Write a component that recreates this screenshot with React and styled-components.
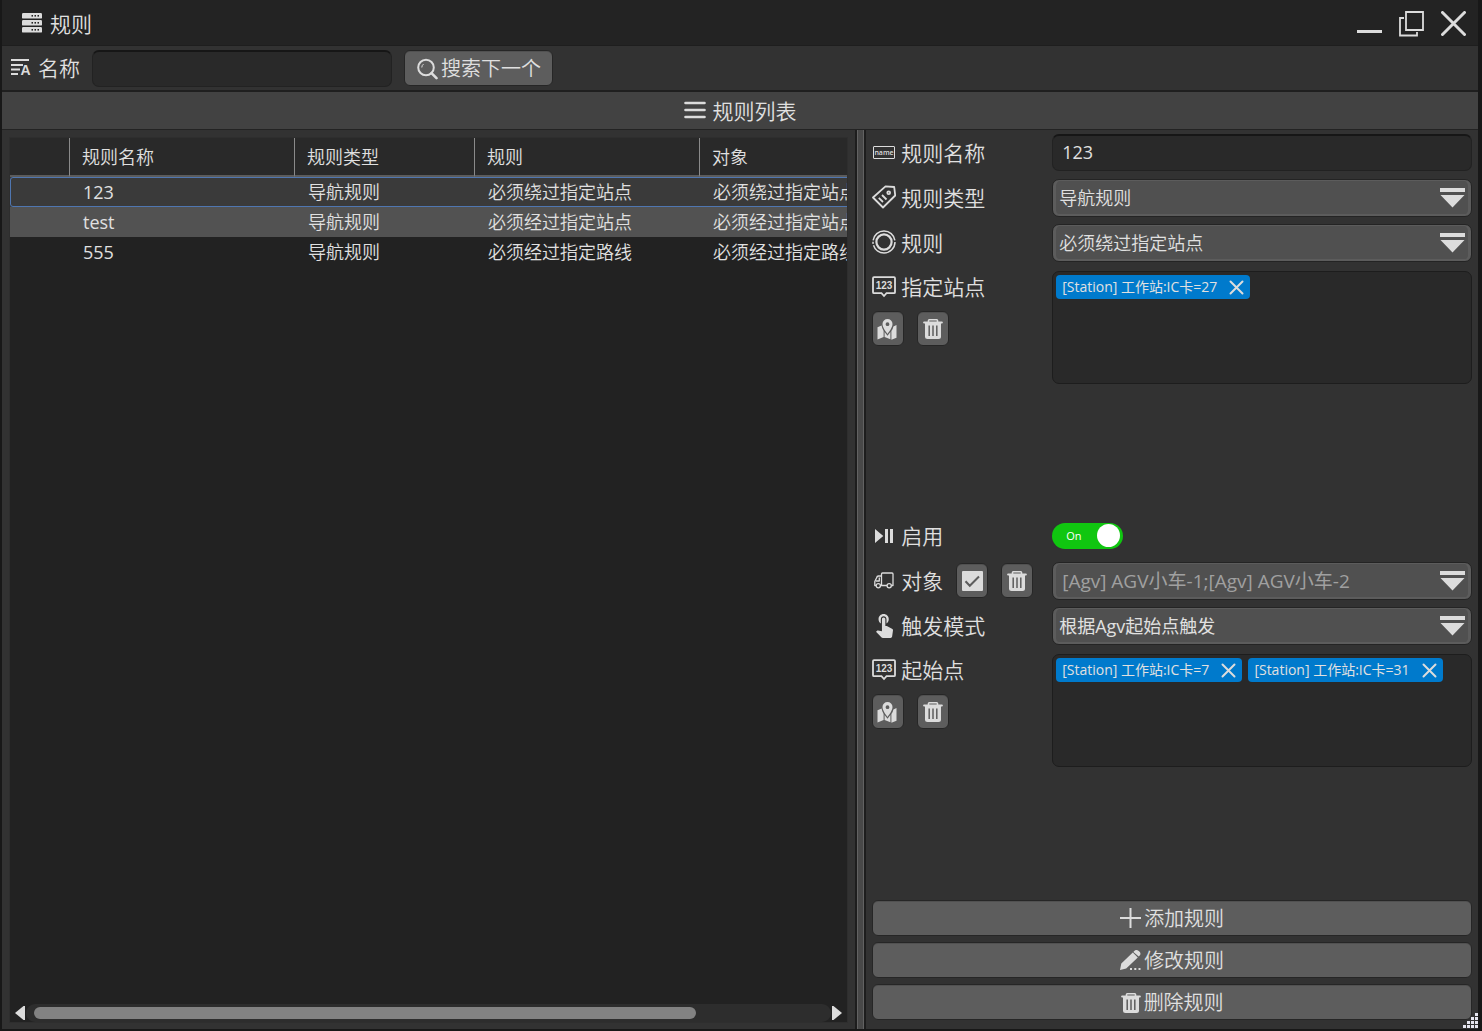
import React, { useState } from 'react'
import styled, { createGlobalStyle } from 'styled-components'

const GlobalStyle = createGlobalStyle`
  * {
    box-sizing: border-box;
  }
  body {
    margin: 0;
    background: #1a1a1a;
    color: #e0e0e0;
    font-family: 'Open Sans', 'Noto Sans CJK SC', sans-serif;
    font-size: 18px;
    font-weight: 350;
    line-height: 24px;
  }
  button, input, select {
    font: inherit;
    color: inherit;
    margin: 0;
  }
  svg {
    display: block;
    flex: none;
  }
`

const Window = styled.div`
  display: flex;
  flex-direction: column;
  height: 100vh;
  min-height: 860px;
  overflow: hidden;
  position: relative;
  border: solid #181818;
  border-width: 0 4px 2px 2px;
  background: #323232;
`

const TitleBar = styled.header`
  display: flex;
  align-items: center;
  height: 46px;
  padding: 2px 12px 0 20px;
  background: #232323;
  border-bottom: 1px solid #1e1e1e;
  & h1 {
    flex: 1;
    margin: 0 0 0 8px;
    font-size: 21px;
    font-weight: 350;
    line-height: 28px;
  }
`

const WindowButtons = styled.div`
  display: flex;
  gap: 17px;
`

const WindowButton = styled.button`
  padding: 0;
  border: 0;
  background: none;
`

const Toolbar = styled.form`
  display: flex;
  align-items: center;
  height: 46px;
  padding: 0 9px;
  border-bottom: 2px solid #1f1f1f;
  & label {
    display: flex;
    align-items: center;
    gap: 6px;
    margin-right: 12px;
    font-size: 21px;
  }
`

const TextBox = styled.input`
  width: ${props => props.$width || '100%'};
  height: 37px;
  padding: 0 9px 2px;
  border: 1px solid #222;
  border-top: 2px solid #161616;
  border-radius: 7px;
  background: #292929;
  font-weight: 400;
  outline: none;
`

const Button = styled.button`
  display: flex;
  align-items: center;
  justify-content: center;
  gap: 3px;
  height: 36px;
  padding: 1px 11px 0;
  border: 1px solid #262626;
  border-radius: 6px;
  background: #5d5d5d;
  box-shadow: inset 0 1px #515151;
  font-size: 20px;
`

const SearchButton = styled(Button)`
  margin-left: 12px;
`

const ListHeading = styled.h2`
  display: flex;
  align-items: center;
  justify-content: center;
  gap: 7px;
  height: 38px;
  margin: 0;
  border-bottom: 1px solid #232323;
  background: #424242;
  font-size: 21px;
  font-weight: 350;
`

const Body = styled.main`
  display: flex;
  flex: 1;
  min-height: 0;
`

const ListPane = styled.section`
  flex: 855 1 0;
  min-width: 0;
  padding: 7px 7px 6px;
`

const ListBox = styled.div`
  display: flex;
  flex-direction: column;
  height: 100%;
  border: 1px solid #2e2e2e;
  background: #222;
`

const TableScroll = styled.div`
  flex: 1;
  overflow: hidden;
`

const Table = styled.table`
  width: 915px;
  table-layout: fixed;
  border-spacing: 0;
  & th {
    height: 39px;
    padding: 0 12px;
    border-right: 1px solid #8a8a8a;
    border-bottom: 2px solid #5b5b5b;
    background: #292929;
    font-weight: 350;
    text-align: left;
  }
  & td {
    height: 30px;
    padding: 0 13px;
    white-space: nowrap;
  }
`

const NameCell = styled.td`
  font-weight: 400;
`

const Row = styled.tr`
  background: ${props => (props.$selected ? '#3a3a3a' : props.$hovered ? '#525252' : 'transparent')};
  border-radius: 3px;
  outline: ${props => (props.$selected ? '1px solid #4f76b0' : 'none')};
  outline-offset: -1px;
`

const ScrollBar = styled.div`
  display: flex;
  align-items: center;
  gap: 1px;
  height: 19px;
  padding: 0 5px;
`

const ScrollTrack = styled.div`
  flex: 1;
  height: 18px;
  padding: 3px 8px;
  border-radius: 9px;
  background: #2d2d2d;
`

const ScrollThumb = styled.div`
  height: 12px;
  border-radius: 6px;
  background: #828282;
`

const Splitter = styled.div`
  width: 11px;
  border: solid #1d1d1d;
  border-width: 0 2px;
  background: #484848;
  box-shadow: inset 1px 0 #626262, inset -1px 0 #626262;
`

const FormPane = styled.form`
  display: flex;
  flex-direction: column;
  flex: 611 1 0;
  min-width: 0;
  padding: 0 6px 9px;
`

const Field = styled.div`
  display: grid;
  grid-template-columns: 3fr 7fr;
  align-items: center;
  height: 45px;
`

const TagField = styled.div`
  display: grid;
  grid-template-columns: 3fr 7fr;
  align-items: start;
  flex: 1;
  padding-top: 6px;
`

const Label = styled.label`
  display: flex;
  align-items: center;
  height: 32px;
  font-size: 21px;
  white-space: nowrap;
`

const IconSlot = styled.span`
  display: flex;
  justify-content: center;
  width: 24px;
  margin-right: 5px;
`

const LabelGroup = styled.div`
  display: flex;
  align-items: center;
  gap: 13px;
`

const IconButtons = styled.div`
  display: flex;
  gap: 13px;
  margin-top: 8px;
`

const IconButton = styled(Button)`
  width: 32px;
  height: 35px;
  padding: 1px 0 0;
`

const SelectWrap = styled.div`
  display: grid;
  align-items: center;
  & > * {
    grid-area: 1 / 1;
  }
  & > svg {
    justify-self: end;
    margin-right: 7px;
    pointer-events: none;
  }
`

const Select = styled.select`
  width: 100%;
  height: 38px;
  padding: 0 40px 0 ${props => (props.$muted ? '9px' : '6px')};
  appearance: none;
  border: 1px solid #242424;
  border-radius: 7px;
  background: #505050;
  box-shadow: inset 3px 0 #5c5c5c, inset -3px 0 #5c5c5c, inset 0 1px #5c5c5c, inset 0 -2px #5c5c5c;
  color: ${props => (props.$muted ? '#a0a0a0' : '#e0e0e0')};
  font-size: ${props => (props.$muted ? '19px' : '18px')};
  font-weight: ${props => (props.$latin ? 400 : 350)};
  outline: none;
`

const TagBox = styled.div`
  display: flex;
  flex-wrap: wrap;
  align-content: flex-start;
  gap: 6px;
  height: 113px;
  padding: 3px;
  border: 1px solid #1d1d1d;
  border-radius: 7px;
  background: #292929;
`

const Tag = styled.span`
  display: flex;
  align-items: center;
  gap: 12px;
  height: 24px;
  padding: 0 6px;
  border-radius: 4px;
  background: #007acc;
  font-size: 14px;
  font-weight: 400;
  line-height: 24px;
  white-space: nowrap;
`

const TagRemove = styled.button`
  padding: 0;
  border: 0;
  background: none;
`

const Switch = styled.label`
  display: flex;
  align-items: center;
  justify-content: space-between;
  width: 71px;
  height: 26px;
  padding: 0 3px 0 14px;
  border-radius: 13px;
  background: ${props => (props.$on ? '#10c610' : '#777')};
  color: #fff;
  font-size: 11px;
  font-weight: 400;
  & input {
    appearance: none;
    width: 23px;
    height: 23px;
    border-radius: 50%;
    background: #fff;
  }
`

const Actions = styled.div`
  display: grid;
  gap: 6px;
  padding-top: 4px;
`

const Grip = styled.div`
  position: absolute;
  right: 0;
  bottom: 0;
`

const INK = '#dcdcdc'

const ServerIcon = () => (
  <svg width="20" height="22" viewBox="0 0 20 22" fill={INK}>
    {[0, 7, 14].map(y => (
      <g key={y}>
        <rect y={y} width="20" height="5.6" rx="1.2" />
        {[9.5, 12.5, 15.5].map(x => (
          <rect key={x} x={x} y={y + 2} width="1.5" height="1.6" fill="#232323" />
        ))}
      </g>
    ))}
  </svg>
)

const SortNameIcon = () => (
  <svg width="21" height="22" viewBox="0 0 21 22" fill={INK}>
    <path d="M0 2h18v2H0zM0 7h12v2H0zM0 11.500h9v2H0zM0 16h7v2H0z" />
    <text x="9.500" y="18" fontSize="14" fontWeight="700" fontFamily="Liberation Sans">A</text>
  </svg>
)

const SearchIcon = () => (
  <svg width="22" height="22" viewBox="0 0 22 22" fill="none" stroke={INK}>
    <circle cx="10" cy="9.500" r="7.800" strokeWidth="2" />
    <path d="M15.500 15.200l5 5" strokeWidth="2.600" strokeLinecap="round" />
    <path d="M5.800 9.500a4.200 4.200 0 0 1 1.700-3.400" strokeWidth="1" />
  </svg>
)

const MenuIcon = () => (
  <svg width="22" height="20" viewBox="0 0 22 20" stroke={INK} strokeWidth="2.600" strokeLinecap="round">
    <path d="M1.500 2h19M1.500 9h19M1.500 16h19" />
  </svg>
)

const MinimizeIcon = () => (
  <svg width="25" height="26" viewBox="0 0 25 26" fill={INK}>
    <path d="M0 19h25v3H0z" />
  </svg>
)

const RestoreIcon = () => (
  <svg width="25" height="26" viewBox="0 0 25 26" fill="none" stroke={INK} strokeWidth="1.800">
    <path d="M7 1h17v18H7z" />
    <path d="M5 7H1v17.500h17V21" />
  </svg>
)

const CloseIcon = ({ size = 25, width = 3 }) => (
  <svg width={size} height={size} viewBox={`0 0 ${size} ${size}`} stroke={INK} strokeWidth={width} strokeLinecap="round">
    <path d={`M1.500 1.500L${size - 1.5} ${size - 1.5}M${size - 1.5} 1.500L1.500 ${size - 1.5}`} />
  </svg>
)

const NameIcon = () => (
  <svg width="24" height="15" viewBox="0 0 24 15">
    <rect x="1.500" y="1.500" width="21" height="12" rx=".5" fill="none" stroke={INK} />
    <text x="12" y="10" fontSize="7" textAnchor="middle" fontFamily="Open Sans" fontWeight="600" fill={INK}>name</text>
  </svg>
)

const TagIcon = () => (
  <svg width="24" height="26" viewBox="0 0 24 26" fill="none" stroke={INK} strokeWidth="1.800" strokeLinejoin="round">
    <path d="M1 12.500L13.500 1.300l8.700.7 1 8.500L11 22.500z" />
    <circle cx="16.700" cy="7.700" r="1.400" />
    <path d="M6.800 12.800l4.200 4.200M10 10l4.500 4.500" />
  </svg>
)

const RingIcon = () => (
  <svg width="24" height="26" viewBox="0 0 24 26" fill="none" stroke={INK}>
    <circle cx="12" cy="12" r="7.600" strokeWidth="2.200" />
    <circle cx="12" cy="12" r="11" strokeWidth="1.500" strokeDasharray="31 1.500 2 1.500 31 2" />
  </svg>
)

const NumberIcon = () => (
  <svg width="24" height="22" viewBox="0 0 24 22">
    <path d="M2 1.200h20q1 0 1 1v14q0 1-1 1h-7.500L12 20l-2.500-2.800H2q-1 0-1-1v-14q0-1 1-1z" fill="none" stroke={INK} strokeWidth="1.800" />
    <text x="12" y="13" fontSize="10" textAnchor="middle" fontFamily="Liberation Sans" fontWeight="700" fill={INK}>123</text>
  </svg>
)

const PlayPauseIcon = () => (
  <svg width="20" height="14" viewBox="0 0 20 14" fill={INK}>
    <path d="M1 0l8.300 7L1 14zM11 0h3v14h-3zM16 0h3v14h-3z" />
  </svg>
)

const TruckIcon = () => (
  <svg width="20" height="17" viewBox="0 0 20 17" fill="none" stroke={INK} strokeWidth="1.300" strokeLinejoin="round">
    <path d="M7.500 13.500V2q0-1 1-1H18q1 0 1 1v11.500h-1.500M13 13.500H6.500M7.500 4H4.500Q3 4 2.500 6L.8 9.500v4H2" />
    <path d="M5.300 5.500v3.500h-3.500" />
    <circle cx="4.300" cy="13.800" r="2.100" />
    <circle cx="15.200" cy="13.800" r="2.100" />
  </svg>
)

const TouchIcon = () => (
  <svg width="17" height="24" viewBox="4.750 3 15 21" fill={INK}>
    <path d="M9 11.240V7.500C9 6.120 10.120 5 11.500 5S14 6.120 14 7.500v3.740c1.210-.81 2-2.180 2-3.740C16 5.010 13.990 3 11.500 3S7 5.010 7 7.500c0 1.560.79 2.930 2 3.740zm9.840 4.630l-4.540-2.260c-.17-.07-.35-.11-.54-.11H13v-6c0-.83-.67-1.500-1.500-1.500S10 6.670 10 7.500v10.740l-3.430-.72c-.08-.01-.15-.03-.24-.03-.31 0-.59.13-.79.33l-.79.8 4.940 4.940c.27.27.65.44 1.060.44h6.790c.75 0 1.330-.55 1.440-1.280l.75-5.270c.01-.07.02-.14.02-.2 0-.62-.38-1.160-.91-1.380z" />
  </svg>
)

const MapIcon = () => (
  <svg width="22" height="21" viewBox="0 0 22 21" fill={INK}>
    <path d="M.5 8.200L4.600 6.500q.4 3 2 5.500v6L.5 20.500zM7.600 13l2.900 3.800 2.900-3.800v7.300l-5.800-2.200zM14.400 12q1.700-2.600 2-4.600l3.100-1.300v12.700l-5.100 1.900z" />
    <path fillRule="evenodd" d="M10.500 0a5 5 0 0 1 5 5c0 3.400-3 7-5 10-2-3-5-6.600-5-10a5 5 0 0 1 5-5zm0 3.300a1.900 1.900 0 1 0 0 3.800 1.900 1.900 0 0 0 0-3.800z" />
  </svg>
)

const TrashIcon = () => (
  <svg width="20" height="20" viewBox="0 0 20 20">
    <path d="M1.200 3.500h17.600" stroke={INK} strokeWidth="2.200" strokeLinecap="round" />
    <path d="M5.500 3V1.500q0-.7.7-.7h7.600q.7 0 .7.700V3" fill="none" stroke={INK} strokeWidth="1.600" />
    <path d="M2 4h16v13.500q0 2.500-2.500 2.500h-11Q2 20 2 17.500z" fill={INK} />
    <path d="M6.200 6.500v10.500M10 6.500v10.500M13.800 6.500v10.500" stroke="#5d5d5d" strokeWidth="1.500" />
  </svg>
)

const CheckIcon = () => (
  <svg width="21" height="20" viewBox="0 0 21 20">
    <rect width="21" height="20" rx="1" fill={INK} />
    <path d="M3.500 10.200l4.300 4.600 9.200-9.300" fill="none" stroke="#5d5d5d" strokeWidth="2" />
  </svg>
)

const DropIcon = () => (
  <svg width="25" height="20" viewBox="0 0 25 20" fill={INK}>
    <path d="M0 0h25v4H0zM.5 7h24L12.500 19.500z" />
  </svg>
)

const PlusIcon = () => (
  <svg width="21" height="22" viewBox="0 0 21 22" fill={INK}>
    <path d="M9.500 0h2v9h9.500v2h-9.500v9h-2v-9H0V9h9.500z" />
  </svg>
)

const EditIcon = () => (
  <svg width="21" height="22" viewBox="0 0 21 22" fill={INK}>
    <path d="M0 20l1.300-6.500L12.800 2.400l5 5L6.200 18.600zM14 1.300q2-2.200 4.800-.3 3 2.400.7 4.700l-.8.800-5.300-4.600zM10 18h2v2h-2zM14.300 18h2v2h-2zM18.500 18h2v2h-2z" />
  </svg>
)

const ArrowIcon = ({ right }) => (
  <svg width="10" height="14" viewBox="0 0 10 14" fill={INK}>
    <path d={right ? 'M0 0h1.500L10 7l-8.500 7H0z' : 'M10 0H8.500L0 7l8.500 7H10z'} />
  </svg>
)

const GripIcon = () => (
  <svg width="16" height="17" viewBox="0 0 16 17" fill="#e6e6f0">
    {[0, 1, 2, 3].map(r =>
      [0, 1, 2, 3].slice(3 - r).map(c => <rect key={`${r}-${c}`} x={c * 4 + 1} y={r * 4 + 1} width="3" height="3" />)
    )}
  </svg>
)

const rules = [
  { name: '123', type: '导航规则', rule: '必须绕过指定站点', target: '必须绕过指定站点' },
  { name: 'test', type: '导航规则', rule: '必须经过指定站点', target: '必须经过指定站点' },
  { name: '555', type: '导航规则', rule: '必须经过指定路线', target: '必须经过指定路线' },
]

function Dropdown({ id, value, muted, latin }) {
  return (
    <SelectWrap>
      <Select id={id} $muted={muted} $latin={latin} defaultValue={value}>
        <option>{value}</option>
      </Select>
      <DropIcon />
    </SelectWrap>
  )
}

function FieldLabel({ icon, text, htmlFor, id }) {
  return (
    <Label as={htmlFor ? 'label' : 'div'} htmlFor={htmlFor} id={id}>
      <IconSlot>{icon}</IconSlot>
      {text}
    </Label>
  )
}

function Stations({ id, text, initial }) {
  const [tags, setTags] = useState(initial)
  return (
    <TagField>
      <div>
        <FieldLabel icon={<NumberIcon />} text={text} id={id} />
        <IconButtons>
          <IconButton type="button" aria-label="地图"><MapIcon /></IconButton>
          <IconButton type="button" aria-label="清空" onClick={() => setTags([])}><TrashIcon /></IconButton>
        </IconButtons>
      </div>
      <TagBox role="group" aria-labelledby={id}>
        {tags.map(tag => (
          <Tag key={tag}>
            {tag}
            <TagRemove type="button" aria-label="移除" onClick={() => setTags(tags.filter(t => t !== tag))}>
              <CloseIcon size={15} width={2} />
            </TagRemove>
          </Tag>
        ))}
      </TagBox>
    </TagField>
  )
}

function RuleTable() {
  const [selected, setSelected] = useState('123')
  return (
    <ListBox>
      <TableScroll>
        <Table>
          <colgroup>
            <col width="60" />
            <col width="225" />
            <col width="180" />
            <col width="225" />
            <col width="225" />
          </colgroup>
          <thead>
            <tr>
              <th />
              <th>规则名称</th>
              <th>规则类型</th>
              <th>规则</th>
              <th>对象</th>
            </tr>
          </thead>
          <tbody>
            {rules.map(r => (
              <Row key={r.name} $selected={r.name === selected} $hovered={r.name === 'test'} onClick={() => setSelected(r.name)}>
                <td />
                <NameCell>{r.name}</NameCell>
                <td>{r.type}</td>
                <td>{r.rule}</td>
                <td>{r.target}</td>
              </Row>
            ))}
          </tbody>
        </Table>
      </TableScroll>
      <ScrollBar>
        <ArrowIcon />
        <ScrollTrack>
          <ScrollThumb style={{ width: `${(767 / 915) * 100}%` }} />
        </ScrollTrack>
        <ArrowIcon right />
      </ScrollBar>
    </ListBox>
  )
}

export default function App() {
  const [enabled, setEnabled] = useState(true)
  return (
    <>
      <GlobalStyle />
      <Window>
        <TitleBar>
          <ServerIcon />
          <h1>规则</h1>
          <WindowButtons>
            <WindowButton aria-label="最小化"><MinimizeIcon /></WindowButton>
            <WindowButton aria-label="还原"><RestoreIcon /></WindowButton>
            <WindowButton aria-label="关闭"><CloseIcon /></WindowButton>
          </WindowButtons>
        </TitleBar>
        <Toolbar onSubmit={e => e.preventDefault()}>
          <label htmlFor="search">
            <SortNameIcon />
            名称
          </label>
          <TextBox id="search" $width="300px" />
          <SearchButton>
            <SearchIcon />
            搜索下一个
          </SearchButton>
        </Toolbar>
        <ListHeading>
          <MenuIcon />
          规则列表
        </ListHeading>
        <Body>
          <ListPane>
            <RuleTable />
          </ListPane>
          <Splitter />
          <FormPane onSubmit={e => e.preventDefault()}>
            <Field>
              <FieldLabel icon={<NameIcon />} text="规则名称" htmlFor="name" />
              <TextBox id="name" defaultValue="123" />
            </Field>
            <Field>
              <FieldLabel icon={<TagIcon />} text="规则类型" htmlFor="type" />
              <Dropdown id="type" value="导航规则" />
            </Field>
            <Field>
              <FieldLabel icon={<RingIcon />} text="规则" htmlFor="rule" />
              <Dropdown id="rule" value="必须绕过指定站点" />
            </Field>
            <Stations id="stations" text="指定站点" initial={['[Station] 工作站:IC卡=27']} />
            <Field>
              <FieldLabel icon={<PlayPauseIcon />} text="启用" htmlFor="enabled" />
              <Switch $on={enabled}>
                {enabled ? 'On' : 'Off'}
                <input id="enabled" type="checkbox" role="switch" checked={enabled} onChange={e => setEnabled(e.target.checked)} />
              </Switch>
            </Field>
            <Field>
              <LabelGroup>
                <FieldLabel icon={<TruckIcon />} text="对象" htmlFor="target" />
                <IconButton type="button" aria-label="全选"><CheckIcon /></IconButton>
                <IconButton type="button" aria-label="清空"><TrashIcon /></IconButton>
              </LabelGroup>
              <Dropdown id="target" value="[Agv] AGV小车-1;[Agv] AGV小车-2" muted latin />
            </Field>
            <Field>
              <FieldLabel icon={<TouchIcon />} text="触发模式" htmlFor="trigger" />
              <Dropdown id="trigger" value="根据Agv起始点触发" latin />
            </Field>
            <Stations id="starts" text="起始点" initial={['[Station] 工作站:IC卡=7', '[Station] 工作站:IC卡=31']} />
            <Actions>
              <Button type="button"><PlusIcon />添加规则</Button>
              <Button type="button"><EditIcon />修改规则</Button>
              <Button type="button"><TrashIcon />删除规则</Button>
            </Actions>
          </FormPane>
        </Body>
        <Grip><GripIcon /></Grip>
      </Window>
    </>
  )
}
